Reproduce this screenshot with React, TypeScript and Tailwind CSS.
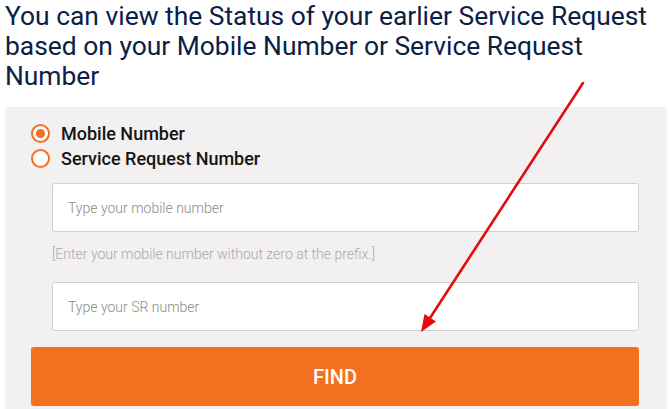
import { useState } from "react";

type Mode = "mobile" | "sr";

export default function App() {
  const [mode, setMode] = useState<Mode>("mobile");

  return (
    <div
      className="relative h-[409px] w-full overflow-hidden bg-white"
      style={{ fontFamily: "Roboto, 'Liberation Sans', sans-serif" }}
    >
      <h1 className="pl-[5px] pr-[4px] pt-[1px] text-[26.4px] leading-[30px] text-[#0b2046]">
        You can view the Status of your earlier Service Request based on your
        Mobile Number or Service Request Number
      </h1>

      <div className="mx-[5px] mt-[16px] flex h-[320px] flex-col bg-[#f2f0f0] pl-[26px] pr-[28px] pt-[14px]">
        <Radio
          label="Mobile Number"
          checked={mode === "mobile"}
          onSelect={() => setMode("mobile")}
        />
        <Radio
          label="Service Request Number"
          checked={mode === "sr"}
          onSelect={() => setMode("sr")}
        />

        <div className="ml-[21px] mt-[12px] flex flex-col">
          <input
            className="h-[49px] w-full rounded-[3px] border border-[#cfcfcf] bg-white px-[15px] text-[14px] font-light text-[#333] outline-none placeholder:text-[#8a8a8a]"
            placeholder="Type your mobile number"
          />
          <div className="mt-[12px] text-[14px] font-light leading-[20px] text-[#a9a9a9]">
            [Enter your mobile number without zero at the prefix.]
          </div>
          <input
            className="mt-[18px] h-[49px] w-full rounded-[3px] border border-[#cfcfcf] bg-white px-[15px] text-[14px] font-light text-[#333] outline-none placeholder:text-[#8a8a8a]"
            placeholder="Type your SR number"
          />
        </div>

        <button className="mt-[16px] h-[59px] w-full rounded-[3px] bg-[#f37021] text-[20px] font-medium text-white">
          FIND
        </button>
      </div>

      <svg
        className="pointer-events-none absolute left-0 top-0"
        width="672"
        height="409"
        viewBox="0 0 672 409"
      >
        <line
          x1="583"
          y1="83"
          x2="430"
          y2="318"
          stroke="#e30b0b"
          strokeWidth="2.6"
          strokeLinecap="round"
        />
        <polygon points="421,332 436,321.5 424.5,314" fill="#e30b0b" />
      </svg>
    </div>
  );
}

function Radio({
  label,
  checked,
  onSelect,
}: {
  label: string;
  checked: boolean;
  onSelect: () => void;
}) {
  return (
    <label
      className="flex h-[25px] cursor-pointer items-center gap-[11px]"
      onClick={onSelect}
    >
      <span className="flex h-[19px] w-[19px] items-center justify-center rounded-full border-2 border-[#f37021] bg-white">
        {checked && <span className="h-[9px] w-[9px] rounded-full bg-[#f37021]" />}
      </span>
      <span className="text-[18px] font-medium text-[#151515]">{label}</span>
    </label>
  );
}
